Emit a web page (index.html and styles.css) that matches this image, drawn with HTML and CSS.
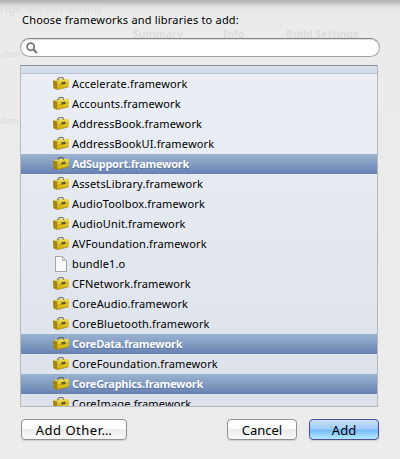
FILE: index.html
```html
<!DOCTYPE html>
<html lang="en">
<head>
<meta charset="utf-8">
<title>Add frameworks</title>
<link rel="stylesheet" href="styles.css">
</head>
<body>
<svg class="defs" width="0" height="0" aria-hidden="true">
  <defs>
    <linearGradient id="front" x1="0" y1="0" x2="0" y2="1"><stop offset="0" stop-color="#f0d93a"/><stop offset="1" stop-color="#d0ad0c"/></linearGradient>
    <symbol id="toolbox" viewBox="0 0 16 13">
      <path d="M0 3.6 3.8 2.2 15.4 1.7 16 2.6 4.6 4.8Z" fill="#e6d660"/>
      <path d="M5 3.2V1.5Q5.2.8 6 .8L9.6.5q.8 0 .8.8v1.4" fill="none" stroke="#55523c" stroke-width=".9"/>
      <path d="M0 3.6 4.6 4.6V12.5L.4 10.9Z" fill="#a3830c"/>
      <path d="M4.4 4.6 16 2.6 15.6 9.8 4.5 12.5Z" fill="url(#front)"/>
      <path d="M.3 6.7 4.5 8 15.8 5.8" fill="none" stroke="#b4940f" stroke-width=".6"/>
      <path d="M8.5 5.2 12.3 4.5V6.9L8.5 7.6Z" fill="#4c4932"/>
      <path d="M9.4 6.2 11.4 5.8" stroke="#a39b73" stroke-width=".6"/>
      <path d="M.5 11 4.5 12.6 15.6 9.9" fill="none" stroke="#957908" stroke-width=".6"/>
    </symbol>
    <symbol id="page" viewBox="0 0 16 16">
      <path d="M2.5.5H9.6L13.5 4.4V15.5H2.5Z" fill="#f8f8f8" stroke="#a3a5a8"/>
      <path d="M9.5.8V4.5H13.3" fill="#dedede" stroke="#a7a9ac" stroke-width=".8"/>
    </symbol>
  </defs>
</svg>
<div class="sheet">
  <div class="behind" aria-hidden="true">
    <span class="ghost g-title">rige ios-sdk-demo</span>
    <span class="ghost g-summary">Summary</span>
    <span class="ghost g-info">Info</span>
    <span class="ghost g-build">Build Settings</span>
    <span class="ghost g-demo">-dem</span>
    <span class="ghost g-demo2">dem</span>
  </div>
  <h1 class="prompt">Choose frameworks and libraries to add:</h1>
  <div class="search">
    <svg width="12" height="12" viewBox="0 0 12 12"><circle cx="4.7" cy="4.7" r="3.6" fill="none" stroke="#717171" stroke-width="1.7"/><path d="M7.3 7.3 10.9 10.9" stroke="#717171" stroke-width="2.1"/></svg>
  </div>
  <div class="list">
    <div class="group"></div>
    <div class="row"><svg class="box"><use href="#toolbox"/></svg><span>Accelerate.framework</span></div>
    <div class="row"><svg class="box"><use href="#toolbox"/></svg><span>Accounts.framework</span></div>
    <div class="row"><svg class="box"><use href="#toolbox"/></svg><span>AddressBook.framework</span></div>
    <div class="row"><svg class="box"><use href="#toolbox"/></svg><span>AddressBookUI.framework</span></div>
    <div class="row selected"><svg class="box"><use href="#toolbox"/></svg><span>AdSupport.framework</span></div>
    <div class="row"><svg class="box"><use href="#toolbox"/></svg><span>AssetsLibrary.framework</span></div>
    <div class="row"><svg class="box"><use href="#toolbox"/></svg><span>AudioToolbox.framework</span></div>
    <div class="row"><svg class="box"><use href="#toolbox"/></svg><span>AudioUnit.framework</span></div>
    <div class="row"><svg class="box"><use href="#toolbox"/></svg><span>AVFoundation.framework</span></div>
    <div class="row"><svg class="file"><use href="#page"/></svg><span>bundle1.o</span></div>
    <div class="row"><svg class="box"><use href="#toolbox"/></svg><span>CFNetwork.framework</span></div>
    <div class="row"><svg class="box"><use href="#toolbox"/></svg><span>CoreAudio.framework</span></div>
    <div class="row"><svg class="box"><use href="#toolbox"/></svg><span>CoreBluetooth.framework</span></div>
    <div class="row selected"><svg class="box"><use href="#toolbox"/></svg><span>CoreData.framework</span></div>
    <div class="row"><svg class="box"><use href="#toolbox"/></svg><span>CoreFoundation.framework</span></div>
    <div class="row selected"><svg class="box"><use href="#toolbox"/></svg><span>CoreGraphics.framework</span></div>
    <div class="row"><svg class="box"><use href="#toolbox"/></svg><span>CoreImage.framework</span></div>
  </div>
  <div class="actions">
    <button class="btn other">Add Other…</button>
    <button class="btn">Cancel</button>
    <button class="btn primary">Add</button>
  </div>
</div>
</body>
</html>
```

FILE: styles.css
```css
* { box-sizing: border-box; }
body { margin: 0; overflow: hidden; font-family: "Lucida Grande", "Noto Sans", sans-serif; color: #000; }
.defs { position: absolute; }
.sheet {
  position: relative;
  width: 400px;
  height: 459px;
  padding: 11px 20px 0;
  background: linear-gradient(#b0b0b0, #c5c5c5 3px, #dedede 6px, #e8e8e8 10px, #ebebeb 20px, #ececec);
}
.behind { position: absolute; inset: 0; overflow: hidden; }
.ghost { position: absolute; font-size: 11px; line-height: 12px; color: #dcdcdc; filter: blur(.7px); white-space: nowrap; }
.g-title { left: 0; top: 3px; letter-spacing: .5px; }
.g-summary { left: 133px; top: 28px; font-weight: bold; font-size: 10.5px; }
.g-info { left: 223px; top: 28px; font-weight: bold; font-size: 10.5px; }
.g-build { left: 286px; top: 28px; font-weight: bold; font-size: 10.5px; }
.g-demo { left: 0; top: 48px; font-size: 9px; letter-spacing: -.3px; }
.g-demo2 { left: 0; top: 115px; font-size: 9px; letter-spacing: -.3px; }
.prompt { position: relative; margin: 0 0 0 2px; height: 27px; font-size: 11px; line-height: 18px; font-weight: 400; white-space: nowrap; letter-spacing: .2px; }
.search {
  position: relative;
  display: flex;
  height: 19px;
  padding: 4px 6px;
  border: 1px solid #a2a2a2;
  border-top-color: #858585;
  border-radius: 10px;
  background: #fff;
  box-shadow: inset 0 1px 1px #ddd;
}
.search svg { margin-top: -1px; margin-left: -1px; }
.list {
  position: relative;
  width: 358px;
  height: 342px;
  margin-top: 8px;
  overflow: hidden;
  border: 1px solid #b8b8b8;
  border-top-color: #8b8c96;
  background: linear-gradient(#ebeff5, #dce1ea);
}
.group { height: 8px; border-bottom: 1px solid #bdc5d3; background: linear-gradient(#d8e1ec, #d2dce9); }
.row { display: flex; align-items: center; height: 20px; padding-left: 32px; font-size: 11px; line-height: 20px; letter-spacing: .14px; white-space: nowrap; }
.row svg { flex: none; width: 16px; margin-right: 3px; }
.row .box { height: 13px; margin-top: -1px; }
.row .file { height: 16px; }
.row.selected { color: #fff; font-weight: 700; letter-spacing: -.26px; background: linear-gradient(#9bb4d0, #6881b2); text-shadow: 0 1px 1px #526d99; }
.actions { position: relative; display: flex; width: 359px; padding-left: 1px; margin-top: 12px; gap: 12px; }
.btn {
  width: 70px;
  height: 21px;
  padding: 0;
  border: 1px solid #919191;
  border-radius: 4px;
  background: linear-gradient(#fff, #fafafa 45%, #ededed 50%, #f8f8f8);
  box-shadow: 0 1px 1px #ccc;
  font: 13px/18px "Lucida Grande", "Noto Sans", sans-serif;
  color: #000;
}
.other { width: 106px; margin-right: auto; letter-spacing: .5px; }
.primary { border-color: #4d4a9c; background: linear-gradient(#c9e0f8, #9dcbf7 48%, #75b8f6 52%, #b5ebff); }
```
